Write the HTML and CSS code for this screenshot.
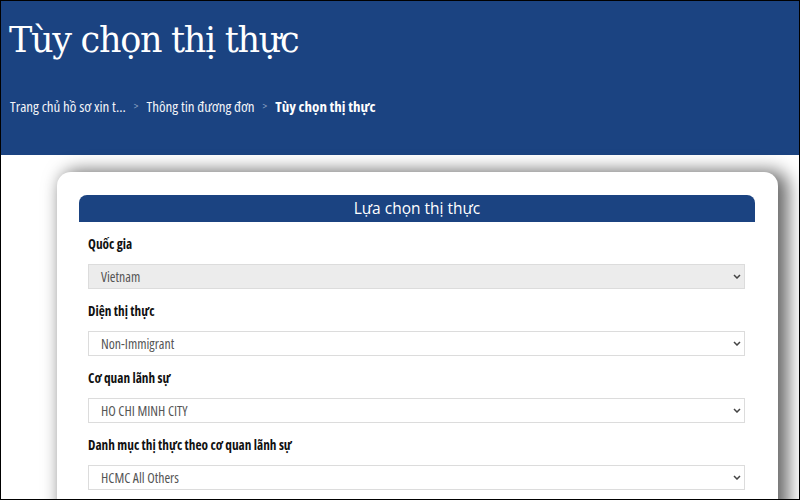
FILE: index.html
```html
<!DOCTYPE html>
<html lang="vi">
<head>
<meta charset="utf-8">
<title>Tùy chọn thị thực</title>
<link rel="stylesheet" href="styles.css">
</head>
<body>
<div class="frame">
  <header class="hero">
    <h1 class="hero-title">Tùy chọn thị thực</h1>
    <nav class="crumbs">
      <span class="crumb">Trang chủ hồ sơ xin t...</span>
      <span class="sep">&gt;</span>
      <span class="crumb">Thông tin đương đơn</span>
      <span class="sep">&gt;</span>
      <span class="crumb current">Tùy chọn thị thực</span>
    </nav>
  </header>
  <main class="main">
    <section class="card">
      <div class="section-head">Lựa chọn thị thực</div>
      <div class="form">
        <div class="field">
          <div class="label">Quốc gia</div>
          <div class="select disabled"><span>Vietnam</span><svg class="chev" viewBox="0 0 8 5" width="8" height="5"><path d="M1 1l3 3 3-3" fill="none" stroke="#444" stroke-width="1.5"/></svg></div>
        </div>
        <div class="field">
          <div class="label">Diện thị thực</div>
          <div class="select"><span>Non-Immigrant</span><svg class="chev" viewBox="0 0 8 5" width="8" height="5"><path d="M1 1l3 3 3-3" fill="none" stroke="#444" stroke-width="1.5"/></svg></div>
        </div>
        <div class="field">
          <div class="label">Cơ quan lãnh sự</div>
          <div class="select"><span>HO CHI MINH CITY</span><svg class="chev" viewBox="0 0 8 5" width="8" height="5"><path d="M1 1l3 3 3-3" fill="none" stroke="#444" stroke-width="1.5"/></svg></div>
        </div>
        <div class="field">
          <div class="label">Danh mục thị thực theo cơ quan lãnh sự</div>
          <div class="select"><span>HCMC All Others</span><svg class="chev" viewBox="0 0 8 5" width="8" height="5"><path d="M1 1l3 3 3-3" fill="none" stroke="#444" stroke-width="1.5"/></svg></div>
        </div>
      </div>
    </section>
  </main>
</div>
</body>
</html>
```
FILE: styles.css
```css
html, body {
  margin: 0;
  padding: 0;
  background: #fff;
}
.frame {
  width: 800px;
  height: 500px;
  box-sizing: border-box;
  border: 1px solid #000;
  overflow: hidden;
  background: #fff;
  font-family: "Open Sans", "Liberation Sans", sans-serif;
  font-stretch: 87.5%;
}
.hero {
  background: #1b4381;
  height: 154px;
  box-sizing: border-box;
  padding: 15px 0 0 8px;
  color: #fff;
}
.hero-title {
  margin: 0;
  font-family: "DejaVu Serif", "Liberation Serif", serif;
  font-weight: normal;
  font-size: 35px;
  line-height: 48px;
  letter-spacing: -1.3px;
  font-stretch: normal;
}
.crumbs {
  margin-top: 33px;
  font-size: 15px;
  line-height: 18px;
  display: flex;
  align-items: center;
  gap: 8px;
  padding-left: 1px;
}
.crumb { color: #f2f4f8; }
.crumb.current { font-weight: 700; color: #fff; }
.sep { color: #8ea3c6; font-size: 11px; }
.main {
  padding: 17px 21px 0 56px;
}
.card {
  background: #fff;
  border-radius: 14px;
  padding: 23px 23px 30px 22px;
  box-shadow: 7px 2px 18px 3px rgba(0, 0, 0, 0.6);
  height: 400px;
}
.section-head {
  background: #1b4381;
  color: #fff;
  height: 27px;
  line-height: 27px;
  text-align: center;
  font-size: 15.5px;
  font-stretch: normal;
  border-radius: 8px 8px 0 0;
}
.form {
  padding: 14px 10px 0 9px;
}
.field {
  margin-bottom: 14px;
}
.label {
  font-size: 13.3px;
  font-weight: 700;
  color: #111;
  line-height: 16px;
  margin-bottom: 12px;
}
.select {
  height: 25px;
  box-sizing: border-box;
  border: 1px solid #dcdcdc;
  display: flex;
  align-items: center;
  justify-content: space-between;
  padding: 0 3px 0 12px;
  font-size: 13.8px;
  color: #555;
  background: #fff;
}
.select.disabled {
  background: #ececec;
}
.chev { display: block; }
```
